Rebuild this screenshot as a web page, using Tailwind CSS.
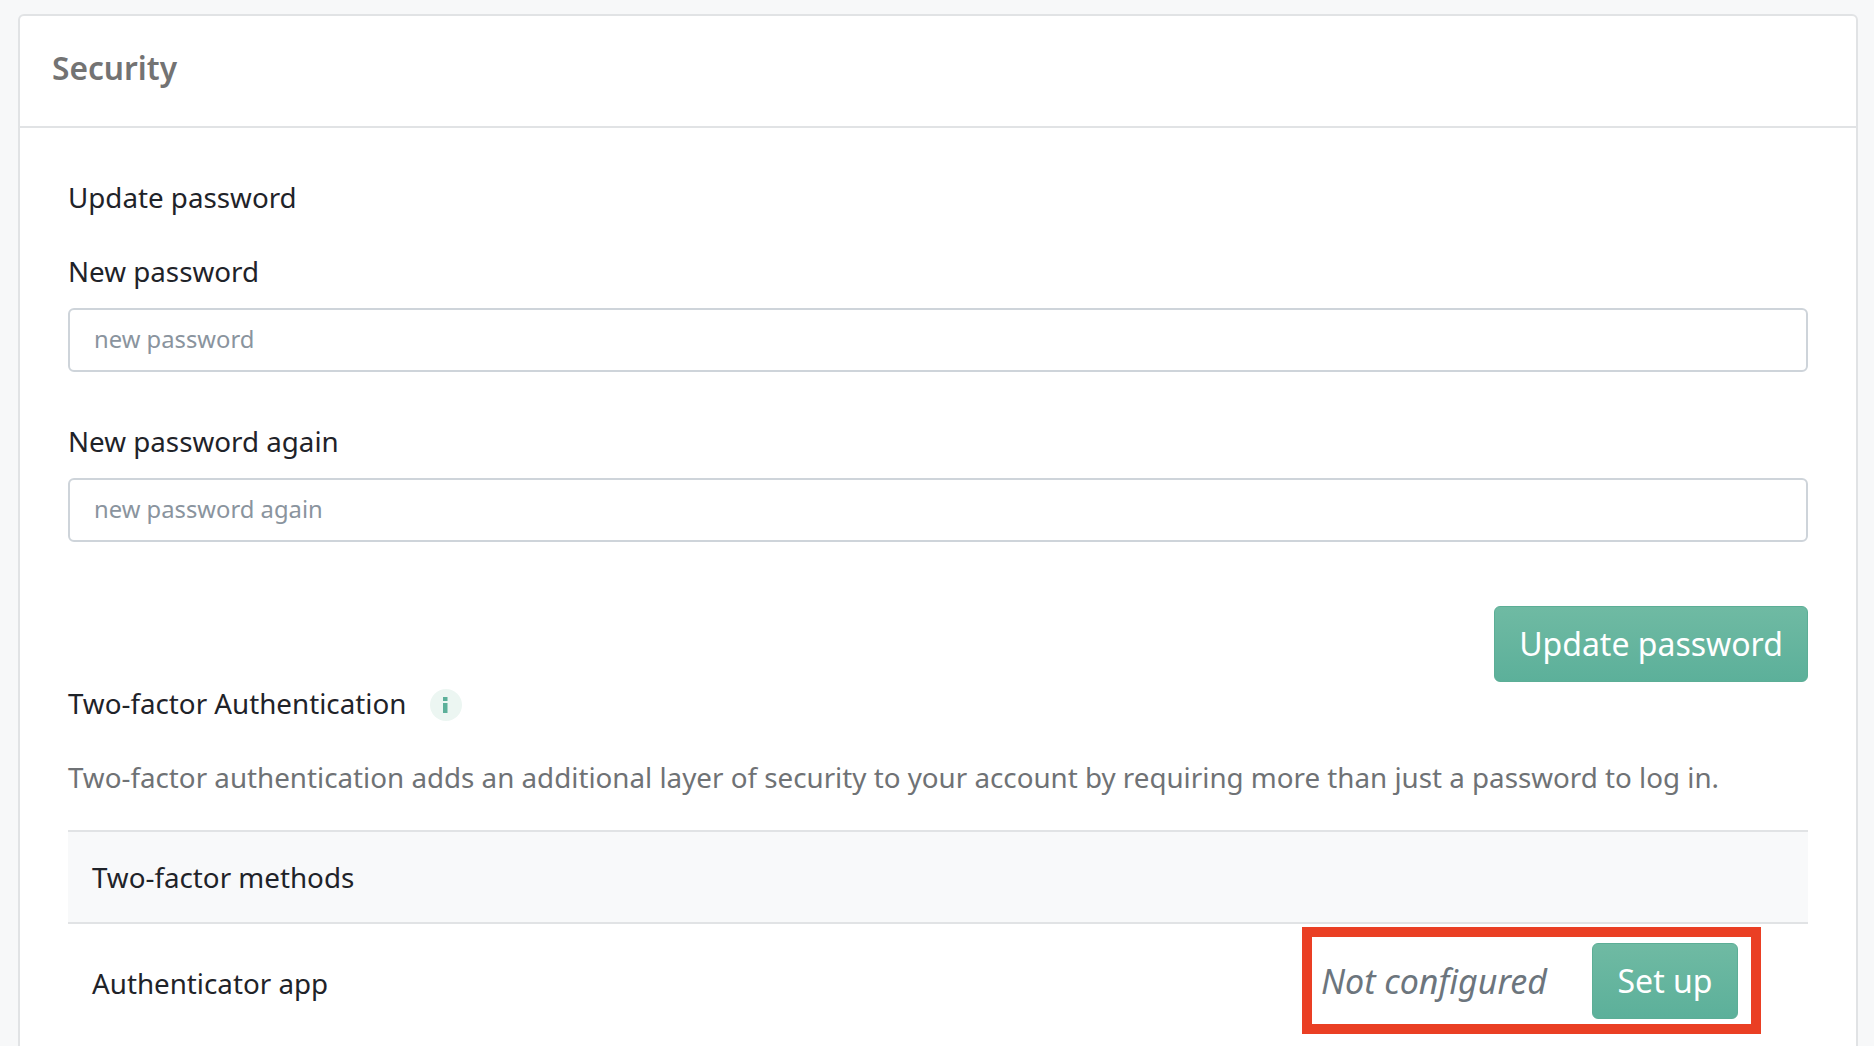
<!doctype html>
<html>
  <head>
    <meta charset="UTF-8">
    <title>Security</title>
    <script src="https://cdn.jsdelivr.net/npm/@tailwindcss/browser@4"></script>
  </head>
  <body class="bg-[#f7f8f9] font-['Noto_Sans','Open_Sans',sans-serif] text-[#1f2329] text-[27.75px] h-[1046px] overflow-hidden">
    <div class="pt-[14px] pl-[18px] pr-[16px]">
      <div class="bg-white border-2 border-[#e1e3e5] rounded-[6px] h-[1040px]">
        <div class="h-[112px] flex items-center pl-[32px] pb-[7px] border-b-2 border-[#e1e3e5]">
          <h2 class="text-[31.7px] font-semibold text-[#737373]">Security</h2>
        </div>
        <div class="pl-[48px] pr-[48px]">
          <h3 class="mt-[51px] leading-[36px]">Update password</h3>
          <label class="block mt-[38px] leading-[36px]">New password</label>
          <input class="block mt-[19px] w-full h-[64px] px-[24px] pb-[3px] border-2 border-[#ced4da] rounded-[6px] text-[23.8px] placeholder-[#8a949e] outline-none" placeholder="new password">
          <label class="block mt-[51px] leading-[36px]">New password again</label>
          <input class="block mt-[19px] w-full h-[64px] px-[24px] pb-[3px] border-2 border-[#ced4da] rounded-[6px] text-[23.8px] placeholder-[#8a949e] outline-none" placeholder="new password again">
          <div class="flex justify-end mt-[64px]">
            <button class="h-[76px] w-[314px] bg-gradient-to-b from-[#6fbaa3] to-[#5cb09a] border border-[#5cae96] rounded-[6px] text-white text-[32px]">Update password</button>
          </div>
          <div class="flex items-center mt-[2px] h-[40px]">
            <h3>Two-factor Authentication</h3>
            <span class="ml-[24px] mt-[2px] w-[32px] h-[32px] rounded-full bg-[#ecf6f2] flex items-center justify-center">
              <svg width="6" height="16" viewBox="0 0 6 16"><rect x="0" y="0" width="4.5" height="4" fill="#5cb09a"/><rect x="0" y="6" width="4.5" height="10" fill="#5cb09a"/></svg>
            </span>
          </div>
          <p class="mt-[33px] leading-[40px] text-[#6f7275] whitespace-nowrap">Two-factor authentication adds an additional layer of security to your account by requiring more than just a password to log in.</p>
          <div class="mt-[33px] h-[94px] bg-[#f8f9fa] border-y-2 border-[#e1e3e5] flex items-center pl-[24px] pt-[2px]">Two-factor methods</div>
          <div class="flex items-start justify-between pl-[24px] pr-[47px]">
            <span class="mt-[41px] leading-[36px]">Authenticator app</span>
            <div class="mt-[3px] w-[459px] h-[107px] border-[10px] border-[#ea3f24] flex items-center justify-between pl-[9px] pr-[13px] pt-[1px]">
              <span class="italic text-[34px] text-[#6c757d]">Not configured</span>
              <button class="w-[146px] h-[76px] bg-gradient-to-b from-[#6fbaa3] to-[#5cb09a] border border-[#5cae96] rounded-[6px] text-white text-[32px]">Set up</button>
            </div>
          </div>
        </div>
      </div>
    </div>
  </body>
</html>
